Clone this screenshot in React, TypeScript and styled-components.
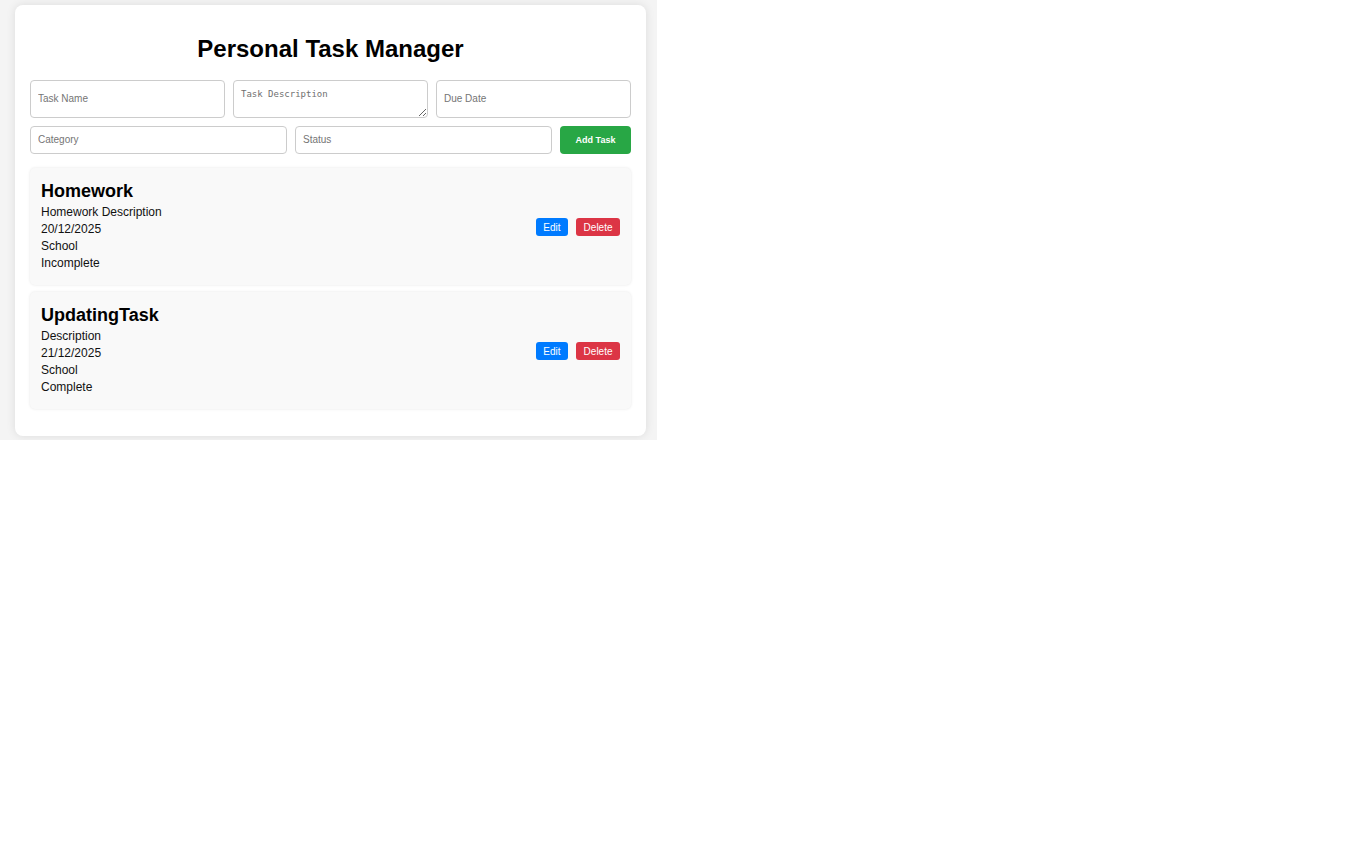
import React, {useState} from 'react';
import styled, {createGlobalStyle} from 'styled-components';

interface TaskType {
    id: number
    name: string
    description: string
    dueDate: string
    category: string
    status: string
}

const initialTasks: TaskType[] = [
    {id: 1, name: 'Homework', description: 'Homework Description', dueDate: '20/12/2025', category: 'School', status: 'Incomplete'},
    {id: 2, name: 'UpdatingTask', description: 'Description', dueDate: '21/12/2025', category: 'School', status: 'Complete'},
]

const App: React.FC = () => {
    const [tasks, setTasks] = useState<TaskType[]>(initialTasks)

    const deleteTask = (id: number) => setTasks(tasks.filter(t => t.id !== id))

    const taskElements = tasks.map(({id, name, description, dueDate, category, status}) => (
        <TaskCard key={id}>
            <TaskInfo>
                <TaskTitle>{name}</TaskTitle>
                <TaskLine>{description}</TaskLine>
                <TaskLine>{dueDate}</TaskLine>
                <TaskLine>{category}</TaskLine>
                <TaskLine>{status}</TaskLine>
            </TaskInfo>
            <TaskActions>
                <SmallButton color="#007bff">Edit</SmallButton>
                <SmallButton color="#dc3545" onClick={() => deleteTask(id)}>Delete</SmallButton>
            </TaskActions>
        </TaskCard>
    ))

    return (
        <>
            <GlobalStyle/>
            <Frame>
                <Container>
                    <Title>Personal Task Manager</Title>
                    <FormGrid>
                        <Input placeholder="Task Name"/>
                        <TextArea placeholder="Task Description"/>
                        <Input placeholder="Due Date"/>
                    </FormGrid>
                    <FormRow>
                        <Input placeholder="Category"/>
                        <Input placeholder="Status"/>
                        <AddButton>Add Task</AddButton>
                    </FormRow>
                    <TaskList>
                        {taskElements}
                    </TaskList>
                </Container>
            </Frame>
        </>
    );
};

export default App;


const GlobalStyle = createGlobalStyle`
  body {
    margin: 0;
    background: #fff;
    font-family: 'Liberation Sans', Arial, sans-serif;
  }
  * {
    box-sizing: border-box;
  }
`

const Frame = styled.div`
  width: 657px;
  height: 440px;
  background: #f4f4f4;
  padding: 5px 11px 0 15px;
`

const Container = styled.div`
  width: 631px;
  background: #fff;
  border-radius: 8px;
  box-shadow: 0 0 10px rgba(0, 0, 0, 0.1);
  padding: 15px 15px 27px;
`

const Title = styled.h1`
  margin: 15px 0 17px;
  text-align: center;
  font-size: 24px;
  line-height: 28px;
  font-weight: bold;
  color: #000;
`

const FormGrid = styled.div`
  display: grid;
  grid-template-columns: repeat(3, 1fr);
  gap: 8px;
`

const FormRow = styled.div`
  display: flex;
  gap: 8px;
  margin-top: 8px;
  height: 28px;
`

const Input = styled.input`
  flex: 1;
  min-width: 0;
  height: 100%;
  min-height: 28px;
  border: 1px solid #ccc;
  border-radius: 4px;
  padding: 0 7px 1px;
  font-family: 'Liberation Sans', Arial, sans-serif;
  font-size: 10px;
  outline: none;
  &::placeholder {
    color: #757575;
  }
`

const TextArea = styled.textarea`
  height: 38px;
  border: 1px solid #ccc;
  border-radius: 4px;
  padding: 8px 7px 7px;
  font-family: 'DejaVu Sans Mono', 'Liberation Mono', monospace;
  font-size: 9px;
  resize: vertical;
  outline: none;
  &::placeholder {
    color: #6f6f6f;
  }
`

const AddButton = styled.button`
  width: 71px;
  border: none;
  border-radius: 4px;
  background: #28a745;
  color: #fff;
  font-family: 'Liberation Sans', Arial, sans-serif;
  font-size: 9px;
  font-weight: bold;
  cursor: pointer;
`

const TaskList = styled.ul`
  list-style: none;
  margin: 14px 0 0;
  padding: 0;
  display: flex;
  flex-direction: column;
  gap: 7px;
`

const TaskCard = styled.li`
  display: flex;
  align-items: center;
  justify-content: space-between;
  background: #f9f9f9;
  border-radius: 5px;
  box-shadow: 0 0 3px rgba(0, 0, 0, 0.1);
  padding: 12px 11px 13px 11px;
`

const TaskInfo = styled.div`
  display: flex;
  flex-direction: column;
`

const TaskTitle = styled.h3`
  margin: 0 0 2px;
  font-size: 18px;
  line-height: 22px;
  font-weight: bold;
  color: #000;
`

const TaskLine = styled.p`
  margin: 0;
  font-size: 12px;
  line-height: 17px;
  color: #111;
`

const TaskActions = styled.div`
  display: flex;
  gap: 8px;
  margin-top: 2px;
`

const SmallButton = styled.button<{ color: string }>`
  height: 18px;
  padding: 0 7.5px;
  border: none;
  border-radius: 3px;
  background: ${props => props.color};
  color: #fff;
  font-family: 'Liberation Sans', Arial, sans-serif;
  font-size: 10px;
  cursor: pointer;
`
